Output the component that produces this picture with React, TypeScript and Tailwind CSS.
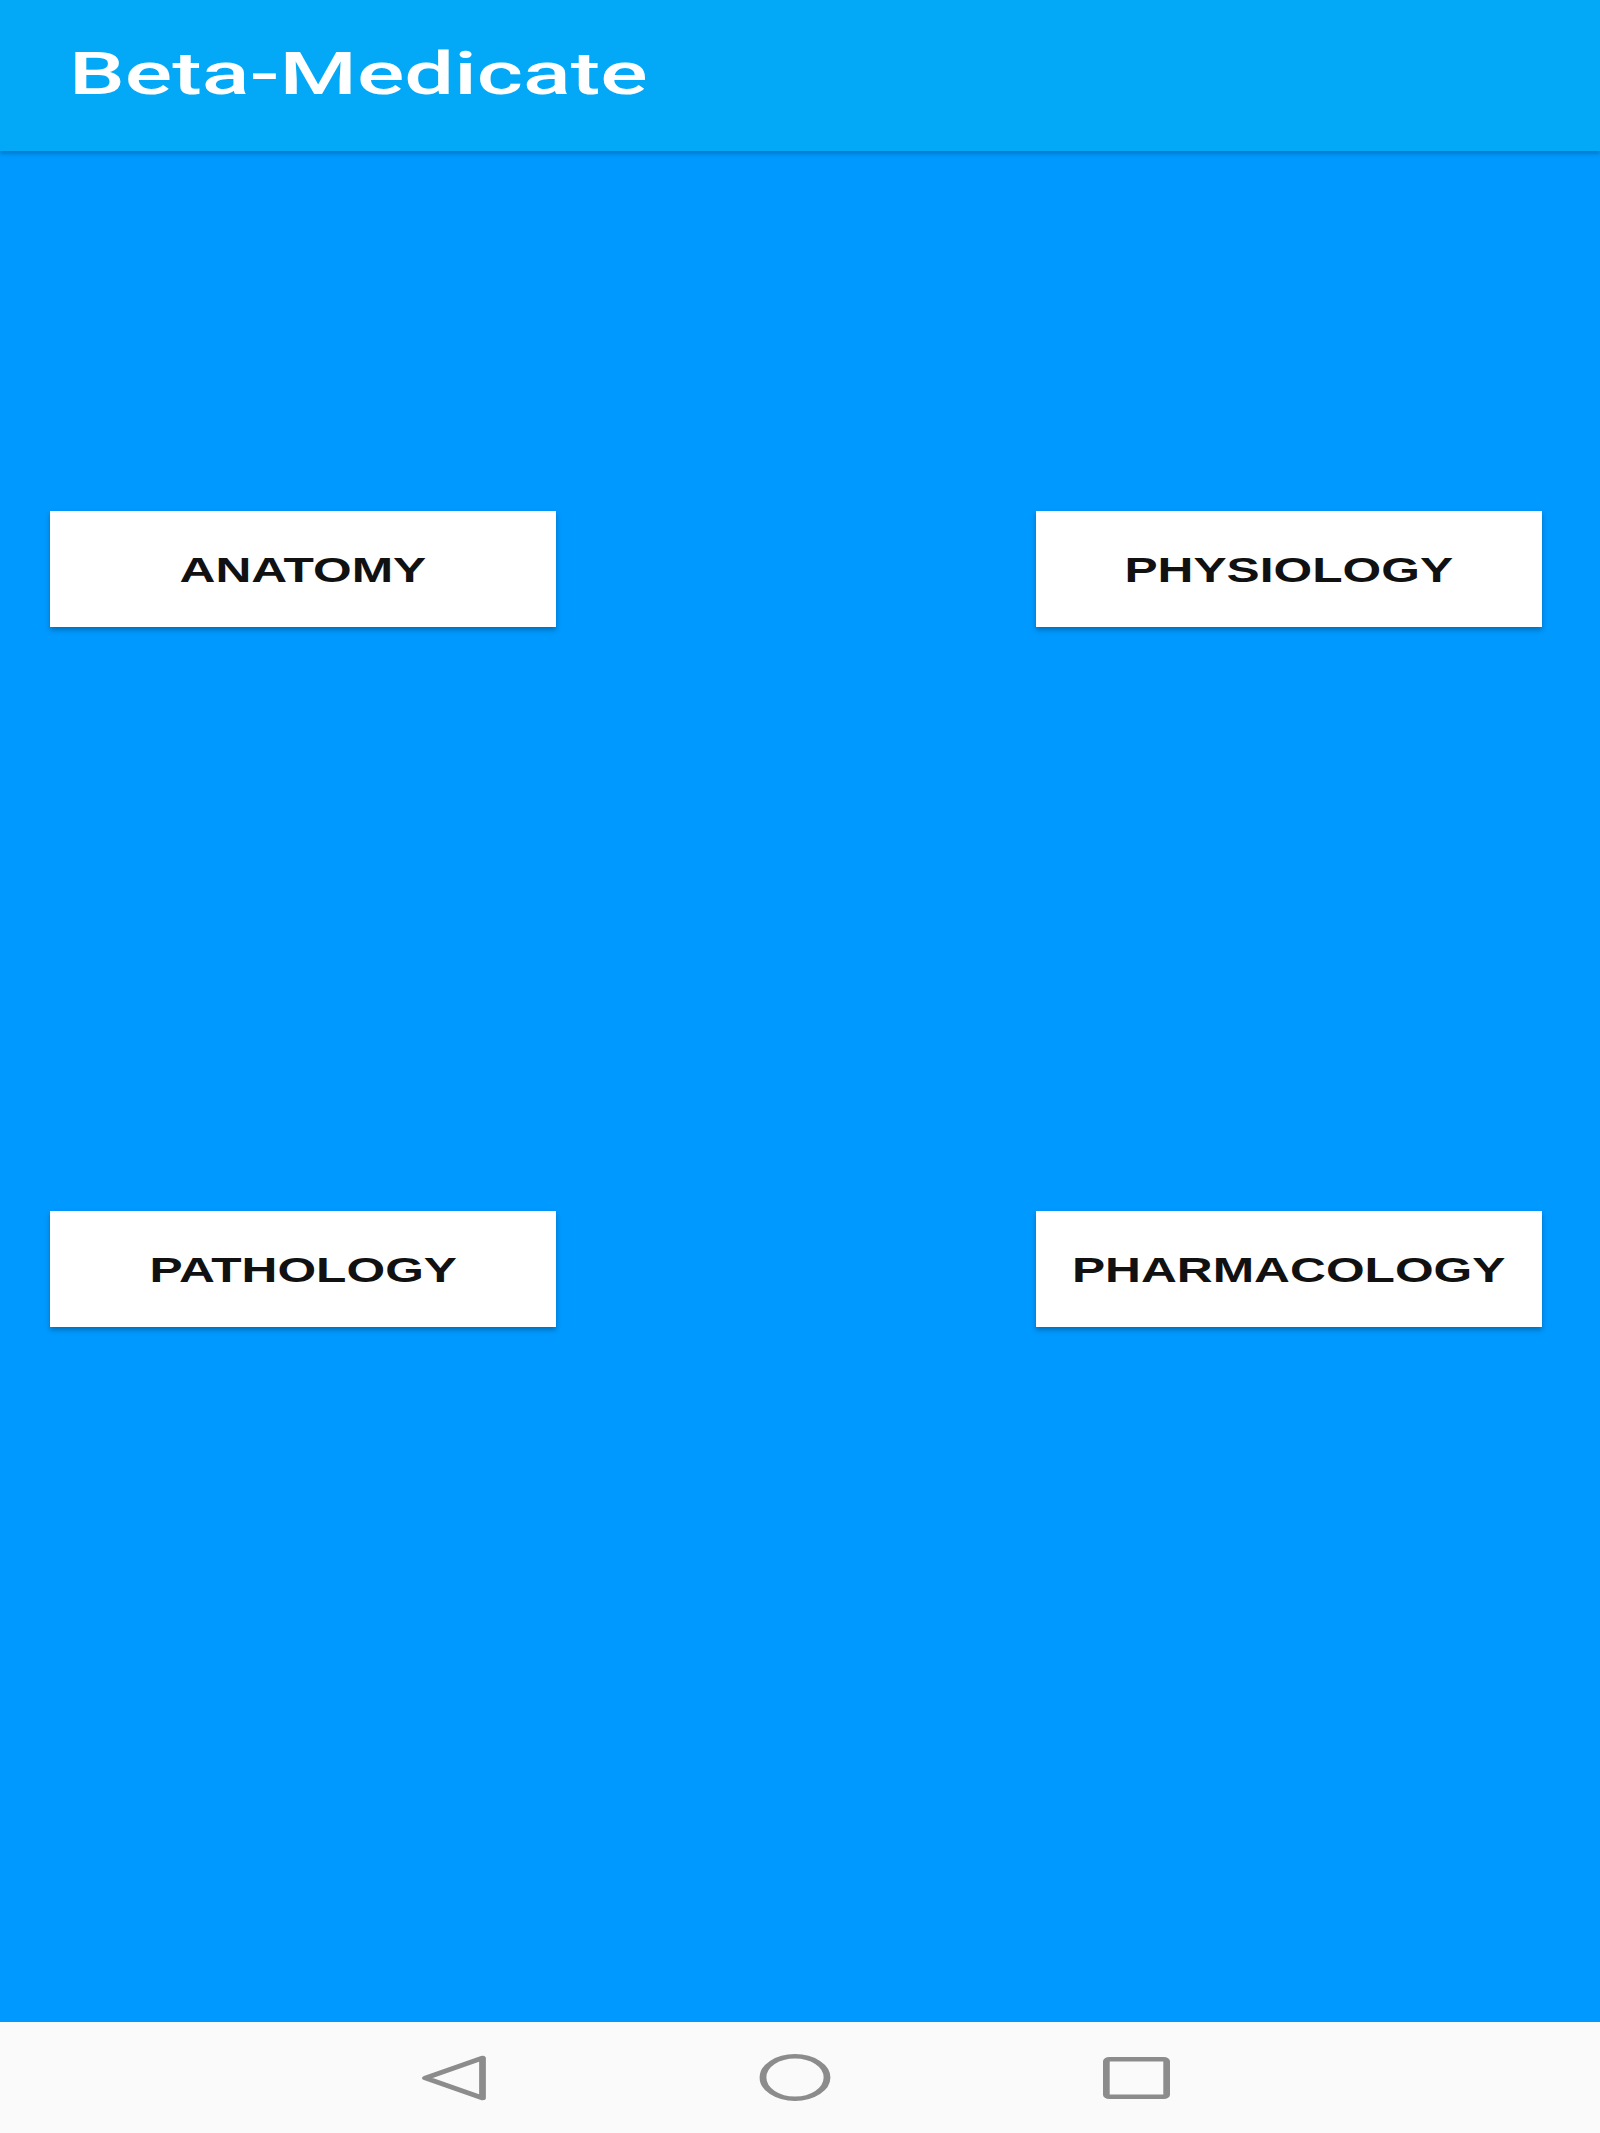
import React from "react";

const rows = [
  ["ANATOMY", "PHYSIOLOGY"],
  ["PATHOLOGY", "PHARMACOLOGY"],
];

function SubjectButton({ label }: { label: string }) {
  return (
    <button className="w-[506px] h-[116px] bg-white flex items-center justify-center shadow-[0_3px_5px_rgba(0,0,0,0.28)]">
      <span
        className="inline-block scale-x-[1.42] text-[35px] font-bold text-[#111] leading-none"
        style={{ fontFamily: '"Liberation Sans", Arial, sans-serif' }}
      >
        {label}
      </span>
    </button>
  );
}

function NavBar() {
  return (
    <div className="h-[111px] bg-[#fafafa] flex items-center justify-center gap-[271px] pr-[10px]">
      <svg width="66" height="46" viewBox="0 0 44 46" preserveAspectRatio="none">
        <path
          d="M3 23 L41 3 L41 43 Z"
          fill="none"
          stroke="#8c8c8c"
          strokeWidth="4.5"
          strokeLinejoin="round"
        />
      </svg>
      <svg width="74" height="47" viewBox="0 0 49 47" preserveAspectRatio="none">
        <circle cx="24.5" cy="23.5" r="21.2" fill="none" stroke="#8c8c8c" strokeWidth="4.5" />
      </svg>
      <svg width="67" height="42" viewBox="0 0 45 42" preserveAspectRatio="none">
        <rect x="2.25" y="2.25" width="40.5" height="37.5" rx="2" fill="none" stroke="#8c8c8c" strokeWidth="4.5" />
      </svg>
    </div>
  );
}

export default function App() {
  return (
    <div className="w-[1600px] h-[2133px] flex flex-col bg-[#0099ff]">
      <header className="h-[151px] shrink-0 bg-[#03a9f6] flex items-center pl-[69px] pb-[4px] shadow-[0_3px_4px_rgba(0,0,0,0.2)] relative z-10">
        <span
          className="inline-block origin-left scale-x-150 text-[59px] font-medium text-white leading-none"
          style={{ fontFamily: "Roboto, sans-serif" }}
        >
          Beta-Medicate
        </span>
      </header>

      <main className="flex-1 flex flex-col gap-[584px] pt-[360px] pl-[50px] pr-[58px]">
        {rows.map((row) => (
          <div key={row[0]} className="flex justify-between">
            {row.map((label) => (
              <SubjectButton key={label} label={label} />
            ))}
          </div>
        ))}
      </main>

      <NavBar />
    </div>
  );
}
